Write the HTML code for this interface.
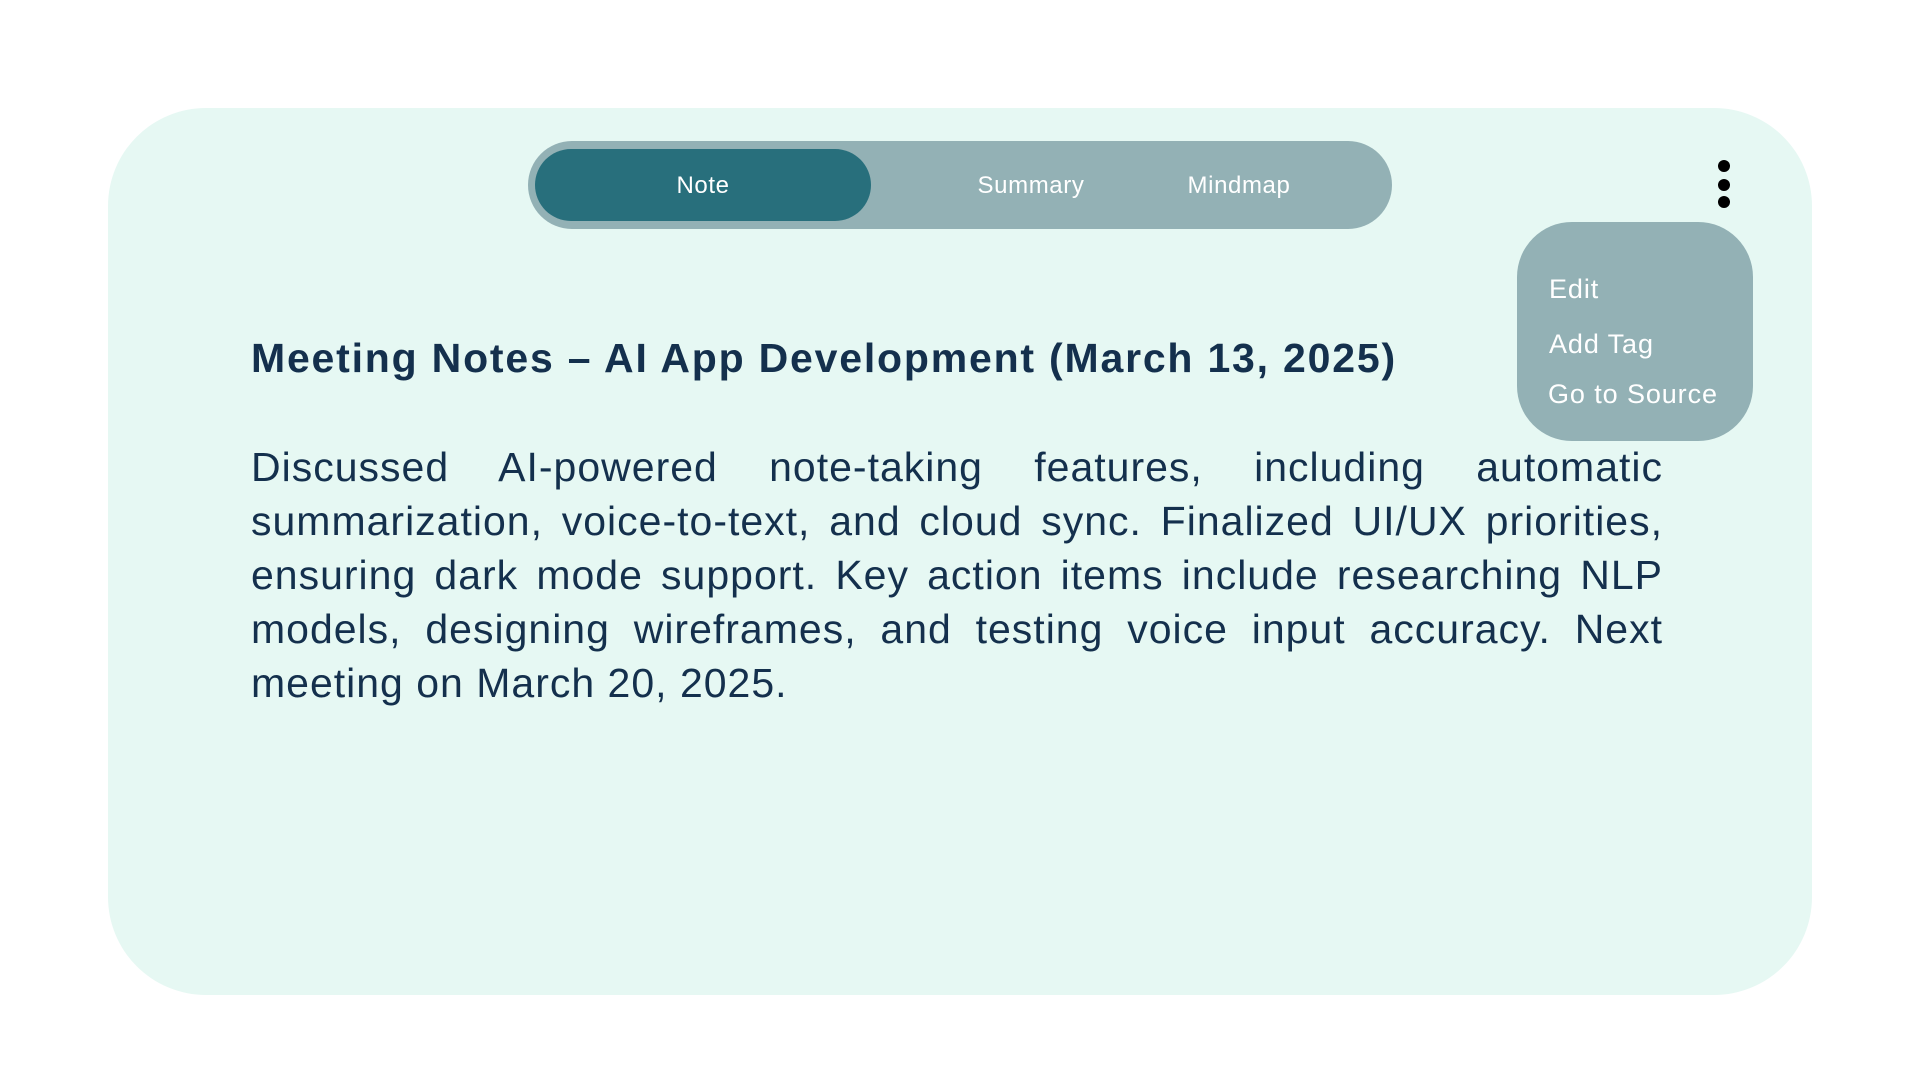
<!DOCTYPE html>
<html><head><meta charset="utf-8"><style>
html,body{margin:0;padding:0;width:1920px;height:1080px;background:#fff;overflow:hidden;font-family:"Liberation Sans",sans-serif;}
.card{position:absolute;left:108px;top:108px;width:1704px;height:887px;background:#e6f8f3;border-radius:98px;}
.tabs{position:absolute;left:528px;top:141px;width:864px;height:88px;background:#93b1b5;border-radius:44px;}
.pill{position:absolute;left:535px;top:149px;width:336px;height:72px;background:#286f7c;border-radius:36px;}
.t{position:absolute;top:172px;color:#fff;font-size:24px;letter-spacing:0.6px;transform:translateX(-50%);white-space:nowrap;}
.dot{position:absolute;left:1718px;width:12px;height:12px;border-radius:50%;background:#000;}
.menu{position:absolute;left:1517px;top:222px;width:236px;height:219px;background:#93b1b5;border-radius:55px;}
.mi{position:absolute;color:#fff;font-size:27px;letter-spacing:0.9px;white-space:nowrap;}
h1{position:absolute;left:251px;top:335px;margin:0;font-size:41px;font-weight:bold;color:#14304d;white-space:nowrap;letter-spacing:1.8px;}
p{position:absolute;left:251px;top:440px;width:1412px;margin:0;font-size:41px;line-height:54px;color:#14304d;text-align:justify;letter-spacing:1px;}
</style></head><body>
<div class="card"></div>
<div class="tabs"></div>
<div class="pill"></div>
<div class="t" style="left:703px">Note</div>
<div class="t" style="left:1031px">Summary</div>
<div class="t" style="left:1239px">Mindmap</div>
<div class="dot" style="top:160px"></div>
<div class="dot" style="top:179px"></div>
<div class="dot" style="top:196px"></div>
<div class="menu"></div>
<div class="mi" style="left:1549px;top:274px">Edit</div>
<div class="mi" style="left:1549px;top:329px">Add Tag</div>
<div class="mi" style="left:1548px;top:379px">Go to Source</div>
<h1>Meeting Notes – AI App Development (March 13, 2025)</h1>
<p>Discussed AI-powered note-taking features, including automatic summarization, voice-to-text, and cloud sync. Finalized UI/UX priorities, ensuring dark mode support. Key action items include researching NLP models, designing wireframes, and testing voice input accuracy. Next meeting on March 20, 2025.</p>
</body></html>
